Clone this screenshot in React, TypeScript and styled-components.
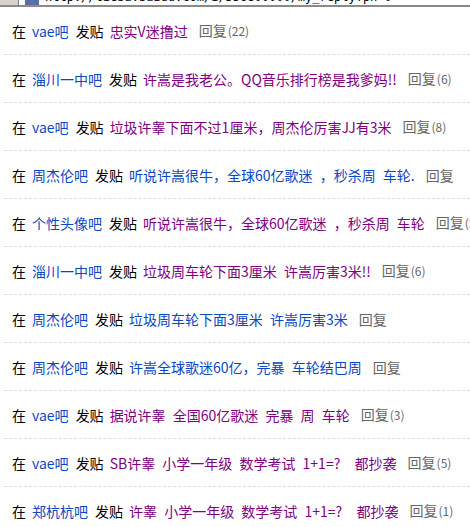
import styled, { createGlobalStyle } from 'styled-components';

const GlobalStyle = createGlobalStyle`
  html, body {
    margin: 0;
    padding: 0;
    background: #fff;
    overflow: hidden;
  }
  body {
    font-family: "Noto Sans CJK SC", "Noto Sans", sans-serif;
  }
`;

const Page = styled.div`
  width: 470px;
  height: 527px;
  overflow: hidden;
  background: #fff;
`;

const AddressStrip = styled.div`
  height: 5px;
  display: flex;
  overflow: hidden;
  border-bottom: 2px solid #8a8a8a;
  background: #fff;
`;

const ChromeButton = styled.div`
  width: 18px;
  flex-shrink: 0;
  background: #d6d3ce;
  border-right: 1px solid #808080;
`;

const AddressIcon = styled.div`
  width: 14px;
  margin-left: 6px;
  flex-shrink: 0;
  background: #5a6fa8;
`;

const AddressText = styled.div`
  margin: -10px 0 0 6px;
  font-family: "DejaVu Sans Mono", monospace;
  font-size: 12px;
  line-height: 14px;
  color: #000;
  white-space: nowrap;
`;

const List = styled.ul`
  list-style: none;
  margin: 0 0 0 4px;
  padding: 0;
`;

const Row = styled.li`
  height: 47px;
  display: flex;
  align-items: center;
  padding-left: 8px;
  border-bottom: 1px dashed #d9dee6;
  white-space: pre;
  font-size: 14px;
  line-height: 16px;
`;

const Plain = styled.span`
  color: #000;
  margin-right: 6px;
`;

const Link = styled.a<{ $visited?: boolean }>`
  color: ${({ $visited }) => ($visited ? '#80007f' : '#0a47c2')};
  text-decoration: none;
  margin-right: 7px;
  word-spacing: 4px;
`;

const Reply = styled.span`
  color: #666;
  margin-left: 4px;
`;

const Count = styled.span`
  font-size: 12px;
  color: #666;
  margin-left: 1px;
`;

type Post = {
  bar: string;
  title: string;
  visited: boolean;
  count?: number;
};

const posts: Post[] = [
  { bar: 'vae吧', title: '忠实V迷撸过', visited: true, count: 22 },
  { bar: '淄川一中吧', title: '许嵩是我老公。QQ音乐排行榜是我爹妈!!', visited: true, count: 6 },
  { bar: 'vae吧', title: '垃圾许睾下面不过1厘米，周杰伦厉害JJ有3米', visited: true, count: 8 },
  { bar: '周杰伦吧', title: '听说许嵩很牛，全球60亿歌迷 ，秒杀周 车轮.', visited: false },
  { bar: '个性头像吧', title: '听说许嵩很牛，全球60亿歌迷 ，秒杀周 车轮', visited: true, count: 2 },
  { bar: '淄川一中吧', title: '垃圾周车轮下面3厘米 许嵩厉害3米!!', visited: true, count: 6 },
  { bar: '周杰伦吧', title: '垃圾周车轮下面3厘米 许嵩厉害3米', visited: false },
  { bar: '周杰伦吧', title: '许嵩全球歌迷60亿，完暴 车轮结巴周', visited: false },
  { bar: 'vae吧', title: '据说许睾 全国60亿歌迷 完暴 周 车轮', visited: true, count: 3 },
  { bar: 'vae吧', title: 'SB许睾 小学一年级 数学考试 1+1=?  都抄袭', visited: true, count: 5 },
  { bar: '郑杭杭吧', title: '许睾 小学一年级 数学考试 1+1=?  都抄袭', visited: true, count: 1 },
];

export default function App() {
  return (
    <Page>
      <GlobalStyle />
      <AddressStrip>
        <ChromeButton />
        <AddressIcon />
        <AddressText>http://tieba.baidu.com/i/356800000/my_reply?pn=0</AddressText>
      </AddressStrip>
      <List>
        {posts.map((p, i) => (
          <Row key={i}>
            <Plain>在</Plain>
            <Link href="#" $visited={false}>{p.bar}</Link>
            <Plain>发贴</Plain>
            <Link href="#" $visited={p.visited}>{p.title}</Link>
            <Reply>
              回复
              {p.count !== undefined && <Count>({p.count})</Count>}
            </Reply>
          </Row>
        ))}
      </List>
    </Page>
  );
}
